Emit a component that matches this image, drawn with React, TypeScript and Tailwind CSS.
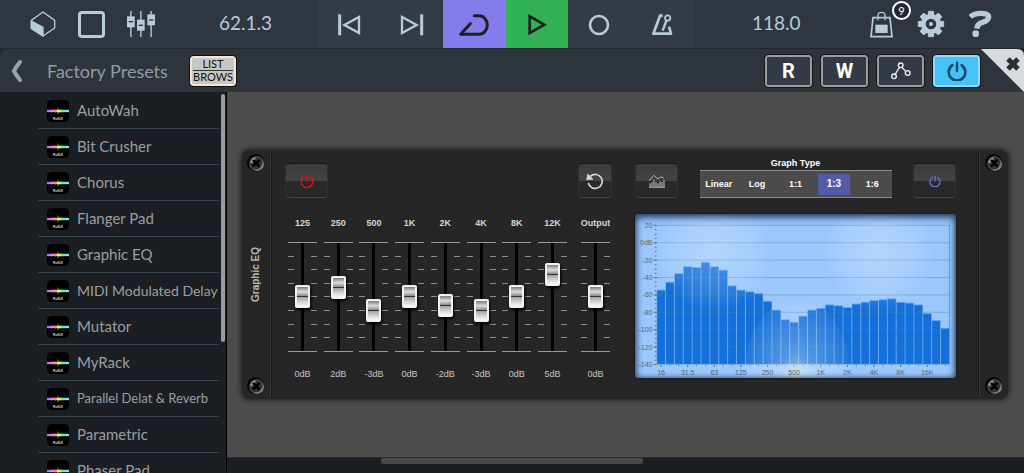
import { useState } from "react"
import type { ReactNode } from "react"

const presets = [
  "AutoWah",
  "Bit Crusher",
  "Chorus",
  "Flanger Pad",
  "Graphic EQ",
  "MIDI Modulated Delay",
  "Mutator",
  "MyRack",
  "Parallel Delat & Reverb",
  "Parametric",
  "Phaser Pad",
]

const bands = [
  { label: "125", gain: 0 },
  { label: "250", gain: 2 },
  { label: "500", gain: -3 },
  { label: "1K", gain: 0 },
  { label: "2K", gain: -2 },
  { label: "4K", gain: -3 },
  { label: "8K", gain: 0 },
  { label: "12K", gain: 5 },
]

const graphTypes = ["Linear", "Log", "1:1", "1:3", "1:6"]

// third-octave levels in dB, 16 Hz upwards
const levels = [
  -54, -45, -35, -27, -28, -22, -27, -31, -49, -54, -56, -58, -67, -77, -88, -91, -84,
  -77, -75, -71, -72, -74, -70, -68, -66, -65, -64, -68, -69, -71, -81, -89, -98,
]
const freqLabels = ["16", "31.5", "63", "125", "250", "500", "1K", "2K", "4K", "8K", "16K"]
const dbLabels = ["20", "0dB", "-20", "-40", "-60", "-80", "-100", "-120", "-140"]

/* ─── Icons ─── */

function CubeIcon() {
  return (
    <svg width="26" height="26" viewBox="91 36 78 78" fill="none" stroke="#b9cad8" strokeWidth="4" strokeLinejoin="round">
      <path d="M130 39 165 64 V87 L130 111 95 88 V64 Z" />
      <path d="M95 66 130 85 V111 L95 88 Z" fill="#b9cad8" />
    </svg>
  )
}

function MixerIcon() {
  return (
    <svg width="28" height="26" viewBox="381 36 84 78">
      <g fill="#9fb1c1">
        <rect x="390" y="36" width="5" height="78" />
        <rect x="420" y="36" width="5" height="78" />
        <rect x="451" y="36" width="5" height="78" />
      </g>
      <g fill="#b9cad8">
        <rect x="381" y="52" width="23" height="33" />
        <rect x="411" y="62" width="23" height="33" />
        <rect x="442" y="46" width="23" height="33" />
      </g>
      <g fill="#2f3640">
        <rect x="386" y="66" width="13" height="4" />
        <rect x="416" y="77" width="13" height="4" />
        <rect x="447" y="61" width="13" height="4" />
      </g>
    </svg>
  )
}

function BagIcon() {
  return (
    <svg width="23" height="27" viewBox="512 34 69 81" fill="none" stroke="#b9cad8" strokeWidth="5">
      <path d="M521 54 H572 L578 111 H515 Z" />
      <path d="M536 62 V47 Q536 38 546 38 Q557 38 557 47 V62" strokeWidth="4" />
      <rect x="528" y="75" width="37" height="25" fill="#b9cad8" stroke="none" />
    </svg>
  )
}

const teeth = [0, 45, 90, 135, 180, 225, 270, 315]

function GearIcon() {
  return (
    <svg width="28" height="28" viewBox="-42 -42 84 84">
      <g fill="#b9cad8" stroke="#b9cad8" strokeWidth="3" strokeLinejoin="round">
        {teeth.map((a) => (
          <path key={a} d="M-9 -24 L-7 -38 H7 L9 -24 Z" transform={`rotate(${a})`} />
        ))}
      </g>
      <circle r="23" fill="none" stroke="#b9cad8" strokeWidth="14" />
      <circle r="6" fill="#b9cad8" />
    </svg>
  )
}

function HelpIcon() {
  return (
    <svg width="24" height="28" viewBox="808 34 72 84">
      <path d="M812 55 Q822 44 843 44 Q868 44 867 56 Q865 67 849 71 Q833 75 831 90" fill="none" stroke="#b9cad8" strokeWidth="16" />
      <circle cx="828" cy="105" r="10" fill="#b9cad8" />
    </svg>
  )
}

function PowerIcon({ size, color, stroke }: { size: number; color: string; stroke: number }) {
  return (
    <svg width={size} height={size} viewBox="0 0 24 24" fill="none" stroke={color} strokeWidth={stroke} strokeLinecap="round">
      <path d="M12 2 V12" />
      <path d="M6.5 5 A10 10 0 1 0 17.5 5" />
    </svg>
  )
}

function RoutingIcon() {
  return (
    <svg width="20" height="18" viewBox="571 184 60 54" fill="none" stroke="#f2f2f2" strokeWidth="4">
      <circle cx="600" cy="194" r="7" />
      <circle cx="580" cy="227" r="7" />
      <circle cx="621" cy="217" r="7" />
      <path d="M596 201 584 220 M604 200 615 212" />
    </svg>
  )
}

function ResetIcon() {
  return (
    <svg width="18" height="18" viewBox="468 95 54 54" fill="none" stroke="#d6d6d6" strokeWidth="5">
      <path d="M481 108 A21 21 0 1 1 475 128" />
      <path d="M473 101 L489 117 L470 118 Z" fill="#d6d6d6" strokeWidth="2" />
    </svg>
  )
}

function AnalyzerIcon() {
  return (
    <svg width="16" height="14" viewBox="86 104 48 42" fill="none" stroke="#c4c4c4" strokeWidth="2.5">
      <path d="M87 124 100 108 113 119 121 112 131 117" />
      <path d="M89 143 V132 M95 143 V128 M101 143 V122 M107 143 V128 M113 143 V132 M119 143 V126 M125 143 V128 M131 143 V122" strokeWidth="3" />
      <path d="M86 144 H134" />
    </svg>
  )
}

function PresetIcon() {
  return (
    <svg width="22" height="22" viewBox="0 0 66 66" className="shrink-0" aria-hidden="true">
      <defs>
        <linearGradient id="spectrum">
          <stop offset="0" stopColor="#8a4bff" />
          <stop offset="0.22" stopColor="#f04be8" />
          <stop offset="0.38" stopColor="#f0503c" />
          <stop offset="0.52" stopColor="#f8e13c" />
          <stop offset="0.7" stopColor="#23d18b" />
          <stop offset="1" stopColor="#4fd8ff" />
        </linearGradient>
        {/* user space, since a flat line has no bounding box to scale to */}
        <linearGradient id="beam" gradientUnits="userSpaceOnUse" x1="0" y1="0" x2="66" y2="0">
          <stop offset="0" stopColor="#a56bff" />
          <stop offset="0.25" stopColor="#ff7df5" />
          <stop offset="0.4" stopColor="#ff8a5c" />
          <stop offset="0.52" stopColor="#fff07a" />
          <stop offset="0.7" stopColor="#5cf0b8" />
          <stop offset="1" stopColor="#7fe6ff" />
        </linearGradient>
      </defs>
      <rect width="66" height="66" rx="14" fill="#000" />
      <path d="M12 33 L17 28 21 31 25 26 29 31 33 20 37 31 42 25 46 31 51 28 56 33 51 37 46 34 42 40 37 35 33 45 29 35 25 39 21 34 17 37 Z" fill="url(#spectrum)" opacity="0.5" />
      <path d="M0 33 H66" stroke="url(#beam)" strokeWidth="7" />
      <text x="33" y="60" textAnchor="middle" fontSize="10" fontWeight="700" fill="#d8d8d8" fontFamily="Liberation Sans, sans-serif">RoSiX</text>
    </svg>
  )
}

function Screw() {
  return (
    <svg width="18" height="18" viewBox="0 0 54 54" aria-hidden="true">
      <defs>
        <linearGradient id="screw" x1="0" y1="0" x2="1" y2="1">
          <stop offset="0" stopColor="#8a8a8a" />
          <stop offset="0.5" stopColor="#4a4a4a" />
          <stop offset="1" stopColor="#b0b0b0" />
        </linearGradient>
      </defs>
      <circle cx="26" cy="26" r="26" fill="#060606" />
      <circle cx="29" cy="29" r="22" fill="url(#screw)" />
      <circle cx="27" cy="27" r="19" fill="#343434" />
      <path d="M10 28 A18 18 0 0 1 26 10 L23 23 Z" fill="#a6a6a6" />
      <path d="M20 20 L35 35 M35 20 L20 35" stroke="#000" strokeWidth="8" strokeLinecap="round" />
    </svg>
  )
}

/* ─── Top bar ─── */

function TransportButton({ label, tone, children }: { label: string; tone?: string; children: ReactNode }) {
  return (
    <button aria-label={label} className={`flex flex-1 items-center justify-center ${tone ?? ""}`}>
      {children}
    </button>
  )
}

function TopBar() {
  return (
    <header className="flex h-12 shrink-0 bg-[#2f3640] text-[#b9cad8]">
      <div className="flex w-[318px] items-center justify-between pr-[46px] pl-[30px]">
        <div className="flex items-center gap-[22px]">
          <button aria-label="Instruments"><CubeIcon /></button>
          <button aria-label="Pads" className="size-[27px] rounded-[4px] border-3 border-[#b9cad8]" />
          <button aria-label="Mixer"><MixerIcon /></button>
        </div>
        <span className="pb-[3px] text-[19px] leading-6">62.1.3</span>
      </div>

      <div className="flex w-[375px] bg-[#343a46]">
        <TransportButton label="Previous">
          <svg width="30" height="24" viewBox="72 36 90 72" fill="none" stroke="#b9cad8" strokeWidth="7">
            <path d="M89 43 V106" strokeWidth="9" />
            <path d="M147 51 V99 L103 75 Z" />
          </svg>
        </TransportButton>
        <TransportButton label="Next">
          <svg width="30" height="24" viewBox="260 36 90 72" fill="none" stroke="#b9cad8" strokeWidth="7">
            <path d="M334 43 V106" strokeWidth="9" />
            <path d="M275 51 V99 L319 75 Z" />
          </svg>
        </TransportButton>
        <TransportButton label="Loop" tone="bg-[#857bec]">
          <svg width="30" height="24" viewBox="448 36 90 72" fill="none" stroke="#1d1f24" strokeWidth="9" strokeLinecap="round" strokeLinejoin="round">
            <path d="M494 47 H508 A25 28 0 0 1 508 103 H453 L482 71" />
          </svg>
        </TransportButton>
        <TransportButton label="Play" tone="bg-[#33b157]">
          <svg width="30" height="24" viewBox="635 36 90 72" fill="none" stroke="#1d1f24" strokeWidth="8">
            <path d="M658 49 V99 L702 74 Z" />
          </svg>
        </TransportButton>
        <TransportButton label="Record">
          <svg width="30" height="24" viewBox="823 36 90 72" fill="none" stroke="#b9cad8" strokeWidth="8">
            <circle cx="868" cy="75" r="27" />
          </svg>
        </TransportButton>
        <TransportButton label="Metronome">
          <svg width="30" height="24" viewBox="1010 36 90 72" fill="none" stroke="#b9cad8" strokeWidth="8" strokeLinejoin="round">
            <path d="M1057 47 H1049 L1029 101 H1082 L1076 80" />
            <path d="M1057 92 L1069 60" strokeWidth="7" />
            <circle cx="1072" cy="54" r="8" strokeWidth="5" />
          </svg>
        </TransportButton>
      </div>

      <div className="flex flex-1 items-center justify-between pr-[31px] pl-[59px]">
        <span className="pb-[3px] text-[19px] leading-6">118.0</span>
        <div className="flex items-center gap-6">
          <button aria-label="Shop" className="relative">
            <BagIcon />
            <span className="absolute -top-[10px] -right-[18px] flex size-[19px] items-center justify-center rounded-full border-2 border-white bg-[#22262d] text-[11px] leading-none text-white">
              9
            </span>
          </button>
          <button aria-label="Settings"><GearIcon /></button>
          <button aria-label="Help"><HelpIcon /></button>
        </div>
      </div>
    </header>
  )
}

/* ─── Preset bar ─── */

const barButton =
  "flex h-8 w-[47px] items-center justify-center rounded-[3px] border-2 border-[#9c9c9c] bg-[#333a46] text-[20px] leading-none font-bold text-white outline-1 outline-[#15171b]"

function PresetBar() {
  return (
    <div className="border-t border-[#22272f] bg-[#22272f]">
      <div className="flex h-[43px] items-center rounded-t-[8px] bg-[#2e343b]">
        <button aria-label="Back" className="ml-[10px]">
          <svg width="14" height="24" viewBox="0 0 14 24" fill="none" stroke="#9ba1aa" strokeWidth="4" strokeLinecap="round">
            <path d="M10 3 Q6 8 4 12 Q6 16 10 21" />
          </svg>
        </button>
        <h1 className="ml-[23px] w-[143px] text-[18px] leading-6 text-[#949aa1]">Factory Presets</h1>
        <button className="flex h-[30px] w-[46px] flex-col items-center justify-center rounded-[3px] border-2 border-[#fbe2d2] bg-[#c5c7c5] text-[11px] leading-[12px] text-[#111] outline-1 outline-[#111]">
          <span>LIST</span>
          <span className="border-t border-[#333]">BROWS</span>
        </button>

        <div className="ml-auto flex gap-[9px] font-[Roboto,sans-serif]">
          <button className={barButton}>R</button>
          <button className={barButton}>W</button>
          <button aria-label="Routing" className={barButton}><RoutingIcon /></button>
          <button
            aria-label="Power"
            className="flex h-8 w-[47px] items-center justify-center rounded-[3px] border-2 border-[#8fdcff] bg-[#45c3f7] outline-1 outline-[#15171b]"
          >
            <PowerIcon size={20} color="#134a66" stroke={3} />
          </button>
        </div>
        <button aria-label="Close" className="ml-px self-start">
          <svg width="43" height="43" viewBox="0 0 43 43">
            <path d="M0 0 H36 Q43 0 43 7 V43 Z" fill="#d8dadc" />
            <path d="M27 10 L37 20 M37 10 L27 20" stroke="#2b3038" strokeWidth="5" />
          </svg>
        </button>
      </div>
    </div>
  )
}

/* ─── Sidebar ─── */

function Sidebar() {
  return (
    <aside className="flex w-[227px] shrink-0 overflow-hidden border-r border-black bg-[#1b1e22] pl-[38px]">
      <ul className="w-[181px] pt-px">
        {presets.map((name) => (
          <li key={name} className="border-b border-[#35454f]">
            <button className="flex h-[35px] w-full items-center gap-2 pl-[9px] text-left whitespace-nowrap text-[#9a9fa3]">
              <PresetIcon />
              <span className={name.length > 20 ? "text-[13px]" : name.length > 18 ? "text-[14px]" : "text-[15px]"}>{name}</span>
            </button>
          </li>
        ))}
      </ul>
      <div className="mt-[2px] ml-[2px] h-[248px] w-1 rounded-full bg-[#979da7]" />
    </aside>
  )
}

/* ─── Faders ─── */

const faderClass =
  "m-0 h-[131px] w-[29px] cursor-pointer appearance-none bg-transparent [direction:rtl] [grid-area:1/1] [writing-mode:vertical-lr] [&::-webkit-slider-thumb]:h-[23px] [&::-webkit-slider-thumb]:w-[15px] [&::-webkit-slider-thumb]:appearance-none [&::-webkit-slider-thumb]:rounded-[2px] [&::-webkit-slider-thumb]:border-2 [&::-webkit-slider-thumb]:border-[#f2f2f2] [&::-webkit-slider-thumb]:bg-[linear-gradient(#7c7c7c,#dcdcdc_25%,#8f8f8f_46%,#333_47%,#333_53%,#a4a4a4_54%,#cfcfcf_75%,#f6f6f6)] [&::-webkit-slider-thumb]:shadow-[1px_2px_3px_#000]"

const tickRows = [1, 2, 3, 4, 5, 6, 7]

function Fader({ label, initial }: { label: string; initial: number }) {
  const [gain, setGain] = useState(initial)
  return (
    <label className="flex w-[29px] flex-col items-center">
      <span className="text-[9px] leading-3 font-bold text-[#d4d4d4]">{label}</span>
      <span className="mt-[2px] grid items-center">
        <svg width="29" height="110" viewBox="0 0 29 110" className="[grid-area:1/1]" aria-hidden="true">
          <rect x="13" width="3" height="110" fill="#000" />
          <path d="M0 0.5 H29 M0 109.5 H29" stroke="#9a9a9a" />
          {tickRows.map((i) => (
            <path key={i} d={`M0 ${0.5 + Math.round(i * 13.6)} H6 M23 ${0.5 + Math.round(i * 13.6)} H29`} stroke="#8d8d8d" />
          ))}
        </svg>
        <input
          type="range"
          min={-12}
          max={12}
          value={gain}
          onChange={(e) => setGain(Number(e.target.value))}
          className={faderClass}
        />
      </span>
      <span className="mt-[6px] text-[9px] leading-3 text-[#c4c4c4]">{gain}dB</span>
    </label>
  )
}

/* ─── Spectrum display ─── */

const left = 21.7
const step = 8.87
const yOf = (db: number) => 11.4 + (20 - db) * 0.869

function Spectrum() {
  return (
    <div className="relative mt-4 overflow-hidden rounded-[4px] bg-[#9bc7fd] shadow-[0_0_2px_1px_#1a1a1a]">
      <svg viewBox="0 0 321 164" className="block w-full" fontFamily="Liberation Sans, sans-serif" fontSize="7" fill="#596b72">
        <defs>
          <radialGradient id="glow">
            <stop offset="0" stopColor="#fff" stopOpacity="0.24" />
            <stop offset="0.6" stopColor="#fff" stopOpacity="0.14" />
            <stop offset="1" stopColor="#fff" stopOpacity="0.02" />
          </radialGradient>
          <radialGradient id="lamp">
            <stop offset="0" stopColor="#fdf6d0" stopOpacity="0.5" />
            <stop offset="0.35" stopColor="#e4f0ff" stopOpacity="0.28" />
            <stop offset="1" stopColor="#fff" stopOpacity="0.05" />
          </radialGradient>
        </defs>

        {levels.map((db, i) => (
          <g key={i}>
            <rect x={left + i * step} y={yOf(db)} width={step} height={150 - yOf(db)} fill="#5c9fec" />
            <rect x={left + i * step + 0.5} y={yOf(db) + 0.9} width={step - 1} height={149 - yOf(db)} fill="#136fd9" />
          </g>
        ))}

        {dbLabels.map((text, i) => (
          <g key={text}>
            <path d={`M22 ${yOf(20 - i * 20)} H314.5`} stroke="#4f8a92" strokeOpacity="0.42" />
            <path d={`M18.5 ${yOf(20 - i * 20)} H22`} stroke="#596b72" strokeOpacity="0.8" />
            <text x="17.5" y={yOf(20 - i * 20) + 2.5} textAnchor="end">{text}</text>
          </g>
        ))}
        <path d="M20.7 11 V150" stroke="#596b72" strokeDasharray="1 3.35" strokeWidth="1.6" />
        <path d="M314.5 11 V150" stroke="#4f8a92" strokeOpacity="0.5" />

        {levels.map((_, i) => (
          <path key={i} d={`M${left + i * step + 4.4} 151 V${i % 3 ? 152 : 153}`} stroke="#596b72" />
        ))}

        <ellipse cx="79" cy="40" rx="56" ry="56" fill="url(#glow)" />
        <ellipse cx="243" cy="40" rx="54" ry="56" fill="url(#glow)" />
        <ellipse cx="79" cy="0" rx="17" ry="4" fill="#fff" opacity="0.35" />
        <ellipse cx="243" cy="0" rx="17" ry="4" fill="#fff" opacity="0.35" />
        <ellipse cx="162" cy="158" rx="53" ry="72" fill="url(#lamp)" />

        {freqLabels.map((text, i) => (
          <text key={text} x={left + i * 3 * step + 4.4} y="160.5" textAnchor="middle">{text}</text>
        ))}
      </svg>
      <div className="pointer-events-none absolute inset-0 rounded-[4px] shadow-[inset_0_3px_9px_#20385a,inset_0_0_5px_#3d6292]" />
    </div>
  )
}

/* ─── Rack unit ─── */

const keyClass =
  "flex h-[35px] items-center justify-center rounded-[4px] border border-b-[#454545] border-t-[#151515] border-x-[#303030] bg-[linear-gradient(#3c3c3c,#434343_50%,#2a2a2a_51%,#272727)]"

function Rack() {
  const [graphType, setGraphType] = useState("1:3")
  return (
    <section className="mr-4 ml-[15px] flex h-[249px] flex-1 rounded-[8px] bg-[#262626] font-['Liberation_Sans',Arial,sans-serif] shadow-[0_0_5px_1px_#1c1c1c]">
      <div className="my-[2px] flex w-[29px] flex-col items-center justify-between border-r border-[#3a3a3a] py-[2px] shadow-[1px_0_0_#171717]">
        <Screw />
        <h2 className="rotate-180 text-[10px] leading-3 font-bold text-[#b9b9b9] [writing-mode:vertical-rl]">Graphic EQ</h2>
        <Screw />
      </div>

      <div className="flex flex-1 justify-between pt-[13px] pr-[23px] pl-[14px]">
        <div className="w-[327px]">
          <div className="flex justify-between">
            <button aria-label="EQ power" className={`w-[43px] ${keyClass}`}>
              <PowerIcon size={14} color="#f20d0d" stroke={2.5} />
            </button>
            <button aria-label="Reset" className={`w-[34px] ${keyClass}`}><ResetIcon /></button>
          </div>
          <div className="mt-[19px] flex pl-[3px]">
            <div className="flex w-[279px] justify-between">
              {bands.map((b) => (
                <Fader key={b.label} label={b.label} initial={b.gain} />
              ))}
            </div>
            <div className="ml-[14px]">
              <Fader label="Output" initial={0} />
            </div>
          </div>
        </div>

        <div className="w-[321px]">
          <div className="flex h-[35px] items-end justify-between">
            <button aria-label="Analyzer" className={`w-[43px] ${keyClass}`}><AnalyzerIcon /></button>
            <div className="flex w-[192px] flex-col text-center text-[9px] leading-3 font-bold text-white">
              <span id="graph-type">Graph Type</span>
              <div
                role="group"
                aria-labelledby="graph-type"
                className="mt-px grid h-7 grid-cols-5 items-center border-y border-[#8a8a8a] bg-[#4b4b4b]"
              >
                {graphTypes.map((type) => (
                  <button
                    key={type}
                    aria-pressed={type === graphType}
                    onClick={() => setGraphType(type)}
                    className={type === graphType ? "mx-[3px] h-[21px] bg-[#5459a8] text-[10px]" : "h-[21px]"}
                  >
                    {type}
                  </button>
                ))}
              </div>
            </div>
            <button aria-label="Analyzer power" className={`w-[43px] ${keyClass}`}>
              <PowerIcon size={12} color="#7272dc" stroke={2.5} />
            </button>
          </div>
          <Spectrum />
        </div>
      </div>

      <div className="my-[2px] flex w-[29px] flex-col items-center justify-between border-l border-[#3a3a3a] py-[2px] shadow-[-1px_0_0_#171717]">
        <Screw />
        <Screw />
      </div>
    </section>
  )
}

export default function App() {
  return (
    <div className="flex h-screen flex-col overflow-hidden bg-[#1b1e22] font-[Lato,sans-serif]">
      <TopBar />
      <PresetBar />
      <div className="flex min-h-0 flex-1">
        <Sidebar />
        <main className="flex min-w-0 flex-1 flex-col">
          <div className="flex flex-1 items-center bg-[#4c4c4c]">
            <Rack />
          </div>
          <div className="h-4 border-t border-[#2b2e31] bg-[#1b1e23]">
            <div className="ml-[154px] h-[6px] w-[262px] rounded-full bg-[#474b4e]" />
          </div>
        </main>
      </div>
    </div>
  )
}
